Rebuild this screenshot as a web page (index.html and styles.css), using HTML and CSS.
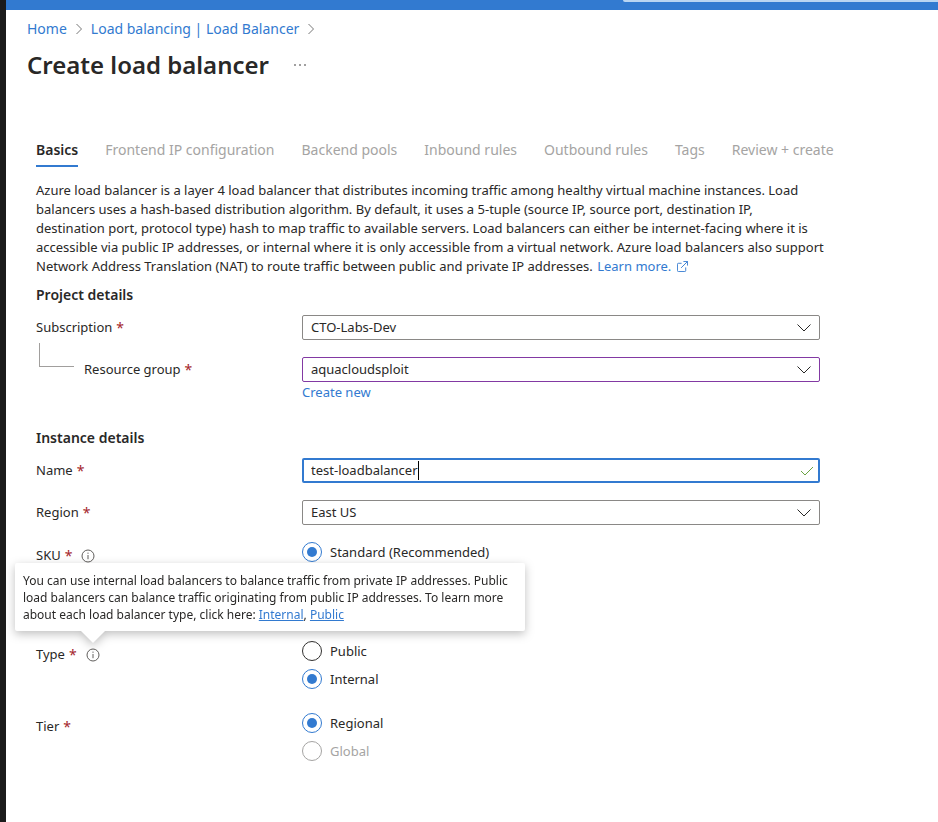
FILE: index.html
```html
<!DOCTYPE html>
<html lang="en">
<head>
<meta charset="utf-8">
<meta name="viewport" content="width=device-width, initial-scale=1">
<title>Create load balancer</title>
<link rel="stylesheet" href="styles.css">
</head>
<body>
<svg class="defs" aria-hidden="true">
  <symbol id="chevron-right" viewBox="0 0 8 12"><path d="M1.500 1l5 5-5 5"/></symbol>
  <symbol id="chevron-down" viewBox="0 0 16 10"><path d="M1.500 1.500L8 8l6.500-6.500"/></symbol>
  <symbol id="info" viewBox="0 0 14 14"><circle cx="7" cy="7" r="6"/><path d="M7 6v4.200M7 3.600v1.200"/></symbol>
</svg>
<header class="topbar"><div class="search"></div></header>
<div class="blade">
  <nav class="crumbs" aria-label="Breadcrumb">
    <a href="#">Home</a>
    <svg class="sep"><use href="#chevron-right"/></svg>
    <a href="#">Load balancing | Load Balancer</a>
    <svg class="sep"><use href="#chevron-right"/></svg>
  </nav>
  <div class="heading">
    <h1>Create load balancer</h1>
    <button type="button" class="more" aria-label="More actions"><svg viewBox="0 0 14 2"><circle cx="2" cy="1" r=".8"/><circle cx="7" cy="1" r=".8"/><circle cx="12" cy="1" r=".8"/></svg></button>
  </div>
  <main class="content">
    <nav class="tabs">
      <button type="button" class="tab active">Basics</button>
      <button type="button" class="tab">Frontend IP configuration</button>
      <button type="button" class="tab">Backend pools</button>
      <button type="button" class="tab">Inbound rules</button>
      <button type="button" class="tab">Outbound rules</button>
      <button type="button" class="tab">Tags</button>
      <button type="button" class="tab">Review + create</button>
    </nav>
    <p class="intro">Azure load balancer is a layer 4 load balancer that distributes incoming traffic among healthy virtual machine instances. Load<br>
      balancers uses a hash-based distribution algorithm. By default, it uses a 5-tuple (source IP, source port, destination IP,<br>
      destination port, protocol type) hash to map traffic to available servers. Load balancers can either be internet-facing where it is<br>
      accessible via public IP addresses, or internal where it is only accessible from a virtual network. Azure load balancers also support<br>
      Network Address Translation (NAT) to route traffic between public and private IP addresses.
      <a href="#">Learn more. <svg class="external" viewBox="0 0 12 12"><path d="M5 2.500H1.500a1 1 0 0 0-1 1v7a1 1 0 0 0 1 1h7a1 1 0 0 0 1-1V7M7 .5h4.500V5M11.500.5L4.500 7.500"/></svg></a></p>
    <form class="form">
      <h2>Project details</h2>
      <div class="row">
        <label class="label" for="subscription">Subscription <b>*</b></label>
        <div class="select"><select id="subscription"><option>CTO-Labs-Dev</option></select><svg><use href="#chevron-down"/></svg></div>
      </div>
      <div class="row">
        <div class="nested"><span class="elbow"></span><label class="label" for="group">Resource group <b>*</b></label></div>
        <div>
          <div class="select changed"><select id="group"><option>aquacloudsploit</option></select><svg><use href="#chevron-down"/></svg></div>
          <a class="create" href="#">Create new</a>
        </div>
      </div>
      <h2 class="second">Instance details</h2>
      <div class="row">
        <label class="label" for="name">Name <b>*</b></label>
        <div class="textbox"><input id="name" type="text" value="test-loadbalancer"><span class="caret"></span><svg class="valid" viewBox="0 0 14 10"><path d="M1 5l4 4 8-8"/></svg></div>
      </div>
      <div class="row">
        <label class="label" for="region">Region <b>*</b></label>
        <div class="select"><select id="region"><option>East US</option></select><svg><use href="#chevron-down"/></svg></div>
      </div>
      <div class="row choice sku">
        <div class="label" id="sku-label">SKU <b>*</b><button type="button" class="info" aria-label="About SKU"><svg><use href="#info"/></svg></button></div>
        <div class="radios" role="radiogroup" aria-labelledby="sku-label">
          <label><input type="radio" name="sku" checked>Standard (Recommended)</label>
        </div>
      </div>
      <div class="row choice">
        <div class="label" id="type-label">Type <b>*</b><button type="button" class="info" aria-label="About type" aria-describedby="type-tip"><svg><use href="#info"/></svg></button>
          <div class="tooltip" id="type-tip" role="tooltip">You can use internal load balancers to balance traffic from private IP addresses. Public<br>load balancers can balance traffic originating from public IP addresses. To learn more<br>about each load balancer type, click here: <a href="#">Internal</a>, <a href="#">Public</a></div>
        </div>
        <div class="radios" role="radiogroup" aria-labelledby="type-label">
          <label><input type="radio" name="type">Public</label>
          <label><input type="radio" name="type" checked>Internal</label>
        </div>
      </div>
      <div class="row choice">
        <div class="label" id="tier-label">Tier <b>*</b></div>
        <div class="radios" role="radiogroup" aria-labelledby="tier-label">
          <label><input type="radio" name="tier" checked>Regional</label>
          <label class="off"><input type="radio" name="tier" disabled>Global</label>
        </div>
      </div>
    </form>
  </main>
</div>
</body>
</html>
```
FILE: styles.css
```css
:root {
  --blue: #327ad0;
  --text: #292827;
  --muted: #a5a4a3;
  --line: #8a8886;
}

* { box-sizing: border-box; }

body {
  margin: 0;
  min-height: 100vh;
  border-left: 6px solid #1b1b1b;
  background: #fff;
  color: var(--text);
  font: 13px/19px "Noto Sans", "Open Sans", sans-serif;
}

button, input, select { font: inherit; color: inherit; margin: 0; }
button { border: 0; padding: 0; background: none; }
a { color: var(--blue); text-decoration: none; }
svg { fill: none; stroke: currentColor; }
.defs { display: none; }

.topbar { display: flex; justify-content: flex-end; height: 10px; background: var(--blue); }
.search { width: 315px; height: 2px; background: #b9d5f2; border-radius: 0 0 0 2px; }

.blade { padding: 9px 21px 0; }
.crumbs { display: flex; align-items: center; gap: 8px; font-size: 14px; line-height: 20px; }
.sep { width: 8px; height: 12px; color: #777; }
.heading { display: flex; align-items: center; gap: 24px; margin-top: 10px; }
h1 { margin: 0; font-size: 24px; line-height: 32px; font-weight: 600; }
.more svg { display: block; width: 14px; height: 2px; fill: var(--text); stroke: none; }

.content { margin: 59px 9px 0; max-width: 810px; }
.tabs { display: flex; gap: 27px; }
.tab { height: 27px; padding-bottom: 5px; border-bottom: 2px solid transparent; font-size: 14px; line-height: 20px; color: var(--muted); white-space: nowrap; }
.tab.active { border-color: var(--blue); color: var(--text); font-weight: 600; }

.intro { margin: 14px 0 9px; white-space: nowrap; }
.intro a { margin-left: 1px; }
.external { width: 11px; height: 11px; margin-left: 2px; vertical-align: -1px; }

.form { max-width: 784px; }
h2 { margin: 0 0 11px; font-size: 14px; line-height: 19px; font-weight: 600; }
h2.second { margin-top: 26px; }
.row { display: grid; grid-template-columns: 266px 1fr; align-items: start; margin-bottom: 17px; }
.label { position: relative; display: flex; align-items: center; gap: 4px; line-height: 25px; }
.label b { color: #a4262c; font-weight: 400; font-size: 14px; }
.nested { display: flex; gap: 10px; padding-left: 3px; }
.elbow { width: 35px; height: 24px; margin-top: -14px; border: solid #a19f9d; border-width: 0 0 1px 1px; }

.select { position: relative; }
.select select { display: block; width: 100%; height: 25px; padding: 0 32px 0 8px; border: 1px solid var(--line); border-radius: 2px; background: #fff; appearance: none; }
.select svg { position: absolute; right: 8px; top: 8px; width: 16px; height: 10px; pointer-events: none; }
.changed select { border-color: #8239a3; }
.create { display: inline-block; line-height: 20px; }

.textbox { display: flex; align-items: center; height: 25px; padding: 0 4px 0 7px; border: 2px solid var(--blue); border-radius: 2px; }
.textbox input { field-sizing: content; padding: 0; border: 0; outline: 0; background: none; line-height: 19px; }
.caret { width: 1px; height: 19px; background: #000; }
.valid { width: 14px; height: 10px; margin-left: auto; color: #6ba343; }

.choice { margin-bottom: 20px; }
.choice .label { padding-top: 1px; }
.radios { display: grid; }
.radios label { display: flex; align-items: center; gap: 8px; height: 28px; }
.choice .radios { margin-top: -4px; }
.sku { min-height: 79px; }
.radios input { appearance: none; display: grid; place-items: center; width: 20px; height: 20px; border: 1px solid #323130; border-radius: 50%; }
.radios input:checked { border-color: var(--blue); }
.radios input:checked::before { content: ""; width: 10px; height: 10px; border-radius: 50%; background: var(--blue); }
.radios .off { color: var(--muted); }
.radios .off input { border-color: var(--muted); }
.info { margin-left: 5px; color: #605e5c; }
.info svg { display: block; width: 14px; height: 14px; }

.tooltip { position: absolute; left: -21px; bottom: 36px; z-index: 1; width: 510px; padding: 9px 8px 8px; border-radius: 2px; background: #fff; font-size: 12px; line-height: 17px; white-space: nowrap; filter: drop-shadow(0 3px 5px rgba(0, 0, 0, .25)); }
.tooltip::after { content: ""; position: absolute; left: 66px; top: 100%; border: solid transparent; border-width: 12px 12px 0; border-top-color: #fff; }
.tooltip a { text-decoration: underline; }
```
